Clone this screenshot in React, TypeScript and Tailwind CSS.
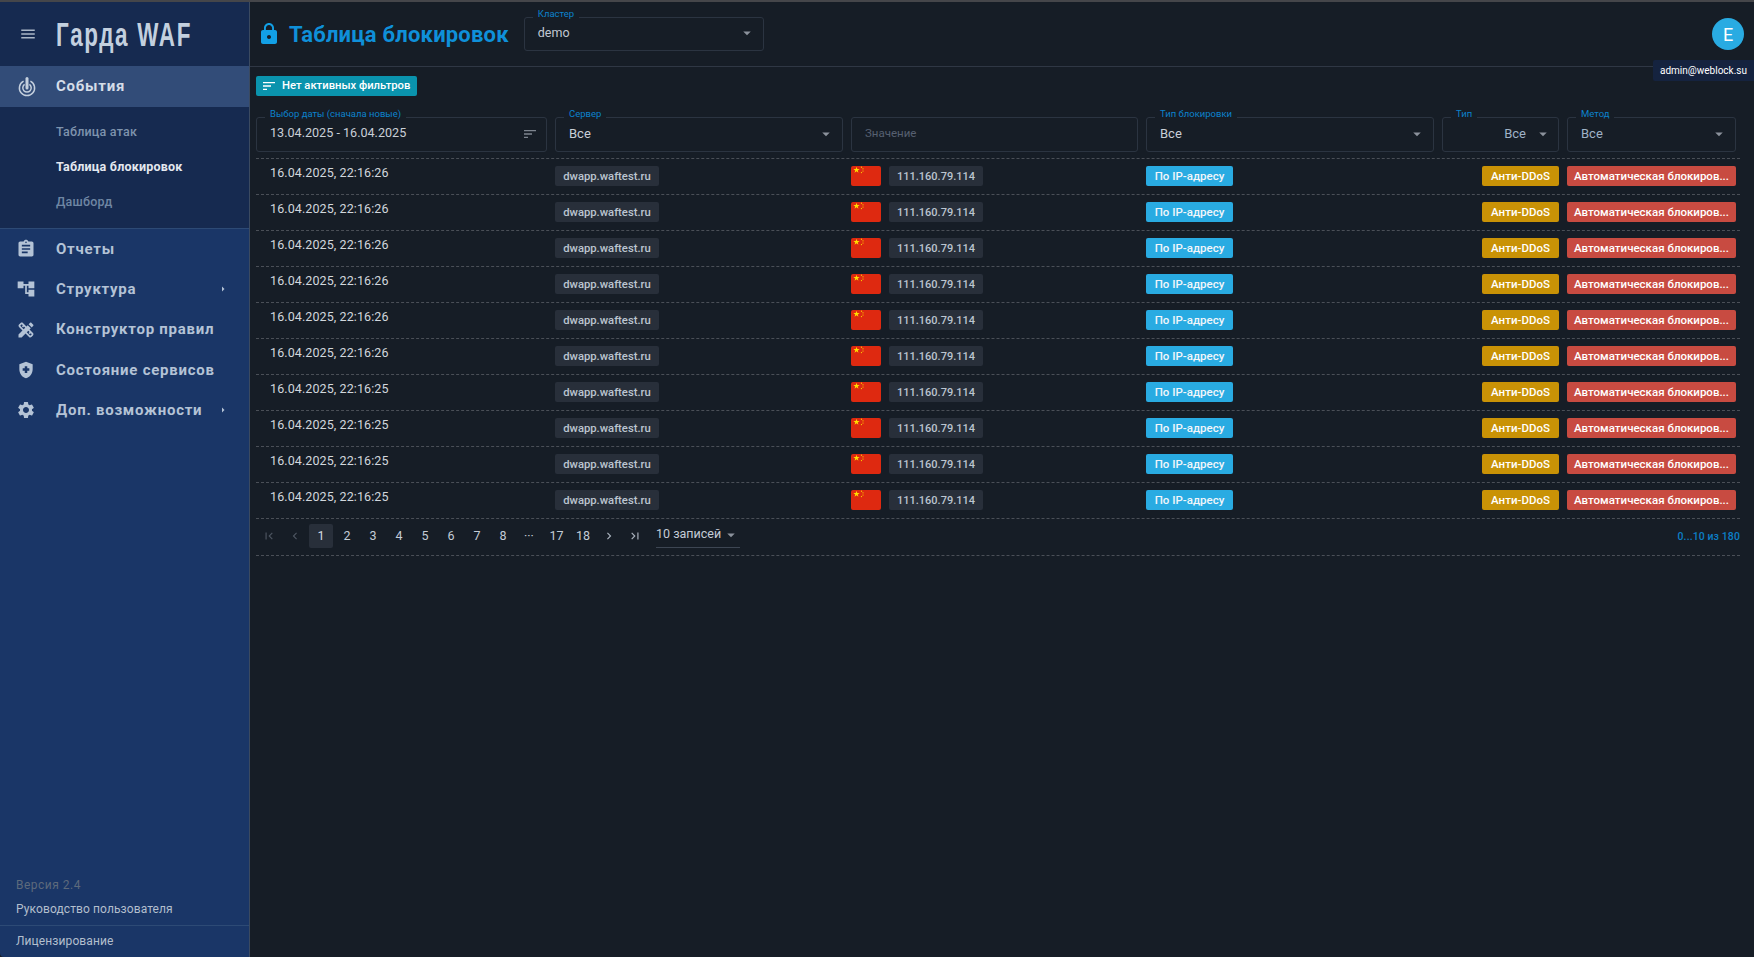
import React from "react";
import {
  MdMenu, MdAssignment, MdAccountTree, MdDesignServices, MdHealthAndSafety, MdSettings,
  MdLock, MdSort, MdArrowDropDown, MdArrowRight, MdFirstPage, MdLastPage, MdChevronLeft, MdChevronRight,
} from "react-icons/md";

const GRID = "grid grid-cols-[291px_288px_287px_288px_117px_169px] gap-x-2";

function EventsIcon() {
  return (
    <svg viewBox="0 0 20 20" className="w-[20px] h-[20px] text-[#c5d0de]" fill="none" stroke="currentColor">
      <path d="M6.6 4.2a7.6 7.6 0 1 0 6.8 0" strokeWidth="1.5" />
      <path d="M7.6 7.4a4.2 4.2 0 1 0 4.8 0" strokeWidth="1.5" />
      <path d="M10 1.5v9.5" strokeWidth="3" strokeLinecap="round" />
    </svg>
  );
}

function Flag() {
  return (
    <svg viewBox="0 0 30 20" className="w-[30px] h-[20px] rounded-[2px] shrink-0">
      <rect width="30" height="20" fill="#de2910" />
      <polygon fill="#ffde00" points="5.5,0.7 6.27,2.94 8.64,2.98 6.75,4.41 7.44,6.67 5.5,5.3 3.56,6.67 4.25,4.41 2.36,2.98 4.73,2.94" />
      <circle cx="10.5" cy="1.2" r="0.6" fill="#ffde00" />
      <circle cx="12" cy="2.8" r="0.6" fill="#ffde00" />
      <circle cx="12" cy="5" r="0.6" fill="#ffde00" />
      <circle cx="10.5" cy="6.6" r="0.6" fill="#ffde00" />
    </svg>
  );
}

function Field({ label, className = "", children }: { label?: string; className?: string; children: React.ReactNode }) {
  return (
    <div className={`relative flex items-center border border-[#2b3441] rounded-[3px] pb-[2px] ${className}`}>
      {label && (
        <span className="absolute left-[8px] -top-[9px] h-[13px] px-[5px] bg-[#161d26] text-[9.5px] leading-[9px] text-[#0c82cc] whitespace-nowrap">
          {label}
        </span>
      )}
      {children}
    </div>
  );
}

function Caret() {
  return <MdArrowDropDown className="w-[18px] h-[18px] text-[#8b929c] shrink-0" />;
}

function Chip({ className, children }: { className: string; children: React.ReactNode }) {
  return (
    <span className={`inline-flex items-center justify-center h-[20px] rounded-[2px] font-medium whitespace-nowrap ${className}`}>
      {children}
    </span>
  );
}

const times = ["26", "26", "26", "26", "26", "26", "25", "25", "25", "25"];

function Row({ s }: { s: string }) {
  return (
    <div className={`${GRID} h-[36px] pt-[7px] border-b border-dashed border-[#4a4f57] w-[1484px]`}>
      <div className="pl-[14px] text-[12.5px] leading-[13px] text-[#d2d7dd] tracking-[0.1px]">16.04.2025, 22:16:{s}</div>
      <div className="flex items-start">
        <Chip className="w-[104px] pt-[2px] bg-[#282f3a] text-[#bcc5d0] text-[11.25px]">dwapp.waftest.ru</Chip>
      </div>
      <div className="flex items-start gap-2">
        <Flag />
        <Chip className="w-[94px] pt-[2px] bg-[#282f3a] text-[#bcc5d0] text-[11px]">111.160.79.114</Chip>
      </div>
      <div className="flex items-start">
        <Chip className="w-[87px] pt-[1px] bg-[#29abe2] text-[#f2f6fa] text-[11.5px]">По IP-адресу</Chip>
      </div>
      <div className="flex justify-end items-start">
        <Chip className="w-[77px] pt-[1px] bg-[#c99206] text-white text-[11.5px]">Анти-DDoS</Chip>
      </div>
      <div className="flex items-start">
        <Chip className="w-[169px] pt-[1px] bg-[#c84b41] text-white text-[11.5px]">Автоматическая блокиров...</Chip>
      </div>
    </div>
  );
}

function NavItem({ icon, label, arrow }: { icon: React.ReactNode; label: string; arrow?: boolean }) {
  return (
    <div className="flex items-center h-[40.25px] pl-[16px] pr-[20px]">
      <span className="w-[40px] shrink-0 flex items-center">{icon}</span>
      <span className="flex-1 text-[15px] font-bold tracking-[0.75px] text-[#b4c3d6] whitespace-nowrap">{label}</span>
      {arrow && <MdArrowRight className="w-[12px] h-[12px] text-[#b4c3d6]" />}
    </div>
  );
}

const navIcon = "w-[20px] h-[20px] text-[#b4c3d6]";

function Sidebar() {
  return (
    <aside className="w-[250px] shrink-0 flex flex-col bg-[#1a3667] border-r border-[#3b4a60] rounded-bl-[4px]">
      <div className="h-[64px] bg-[#162a50] flex items-center shrink-0 overflow-hidden">
        <MdMenu className="w-[18px] h-[18px] ml-[19px] text-[#aab6c6] shrink-0" />
        <span className="ml-[19px] shrink-0 text-[33px] leading-none font-bold tracking-[2.5px] text-[#c3d0df] [font-family:'Liberation_Sans',sans-serif] [transform:scaleX(0.68)] origin-left whitespace-nowrap">
          Гарда WAF
        </span>
      </div>
      <div className="h-[41px] bg-[#324c78] flex items-center pl-[17px] shrink-0">
        <span className="w-[39px] flex"><EventsIcon /></span>
        <span className="text-[15px] font-bold tracking-[0.75px] text-[#d5dde8]">События</span>
      </div>
      <div className="h-[122px] bg-[#162a50] border-b border-[#2d4a75] pt-[8px] pl-[56px] text-[12.5px] font-medium tracking-[0.2px] shrink-0">
        <div className="h-[35px] flex items-center text-[#7e93ad]">Таблица атак</div>
        <div className="h-[35px] flex items-center text-[#e3e8ef] font-bold">Таблица блокировок</div>
        <div className="h-[35px] flex items-center text-[#6f86a3]">Дашборд</div>
      </div>
      <nav className="flex flex-col">
        <NavItem icon={<MdAssignment className={navIcon} />} label="Отчеты" />
        <NavItem icon={<MdAccountTree className={navIcon} />} label="Структура" arrow />
        <NavItem icon={<MdDesignServices className={navIcon} />} label="Конструктор правил" />
        <NavItem icon={<MdHealthAndSafety className={navIcon} />} label="Состояние сервисов" />
        <NavItem icon={<MdSettings className={navIcon} />} label="Доп. возможности" arrow />
      </nav>
      <div className="mt-auto text-[12px] tracking-[0.1px]">
        <div className="pl-[16px] h-[24px] flex items-center text-[#5d6a7c] tracking-[0.5px]">Версия 2.4</div>
        <div className="pl-[16px] h-[24px] flex items-center text-[#b3bfcd]">Руководство пользователя</div>
        <div className="h-[4px]" />
        <div className="pl-[16px] h-[32px] pb-[2px] flex items-center border-t border-[#2d4a75] text-[#b3bfcd]">Лицензирование</div>
      </div>
    </aside>
  );
}

function Pagination() {
  const pages = ["1", "2", "3", "4", "5", "6", "7", "8", "···"];
  return (
    <div className="flex items-center h-[37px] pb-[2px] w-[1484px] border-b border-dashed border-[#4a4f57]">
      <span className="w-[26px] flex justify-center"><MdFirstPage className="w-[14px] h-[14px] text-[#4d5560]" /></span>
      <span className="w-[26px] flex justify-center"><MdChevronLeft className="w-[14px] h-[14px] text-[#4d5560]" /></span>
      {pages.map((p, i) => (
        <span key={p} className="w-[26px] flex justify-center">
          <span className={`w-[24px] h-[24px] flex items-center justify-center rounded-[2px] text-[12.5px] ${i === 0 ? "bg-[#282f3a] text-[#d5dbe2]" : "text-[#c4ccd6]"}`}>{p}</span>
        </span>
      ))}
      <span className="ml-[1px] w-[27px] flex justify-center text-[12.5px] text-[#c4ccd6]">17</span>
      <span className="w-[26px] flex justify-center text-[12.5px] text-[#c4ccd6]">18</span>
      <span className="w-[26px] flex justify-center"><MdChevronRight className="w-[14px] h-[14px] text-[#aab2bd]" /></span>
      <span className="w-[26px] flex justify-center"><MdLastPage className="w-[14px] h-[14px] text-[#aab2bd]" /></span>
      <div className="ml-[8px] w-[84px] h-[24px] flex items-center justify-between border-b border-[#3d4653] text-[12.5px] text-[#c4ccd6] whitespace-nowrap pb-[2px]">
        <span>10 записей</span>
        <Caret />
      </div>
      <span className="ml-auto text-[10.5px] font-medium text-[#0c7fc6] tracking-[0.1px] pt-[2px]">0...10 из 180</span>
    </div>
  );
}

export default function App() {
  return (
    <div className="h-screen w-full flex flex-col overflow-hidden bg-[#161d26] [font-family:Roboto,'Liberation_Sans',sans-serif]">
      <div className="h-[2px] bg-[#45464a] shrink-0" />
      <div className="flex-1 flex min-h-0">
        <Sidebar />
        <main className="relative flex-1 min-w-0 flex flex-col">
          <header className="h-[65px] shrink-0 border-b border-[#2f3744] flex items-center pl-[7px] pr-[10px]">
            <MdLock className="w-[24px] h-[24px] text-[#12a0e6] shrink-0" />
            <h1 className="ml-[8px] text-[22px] font-bold text-[#0f90d9] tracking-[0.2px] whitespace-nowrap">Таблица блокировок</h1>
            <Field label="Кластер" className="ml-[15px] w-[240px] h-[34px] pl-[13px] pr-[7px] justify-between">
              <span className="text-[12.5px] text-[#c2c9d2]">demo</span>
              <Caret />
            </Field>
            <span className="ml-auto w-[32px] h-[32px] rounded-full bg-[#29abe2] text-white text-[18px] flex items-center justify-center">E</span>
          </header>
          <span className="absolute top-[58px] right-0 w-[101px] h-[21px] bg-[#15233f] text-white text-[10px] flex items-center justify-center rounded-l-[2px]">admin@weblock.su</span>

          <div className="pl-[6px] pt-[9px] flex flex-col">
            <div className="w-[161px] h-[20px] rounded-[2px] bg-[#0a93ad] flex items-center pl-[5px] gap-[5px] text-white text-[11.25px] font-medium whitespace-nowrap">
              <MdSort className="w-[16px] h-[16px] shrink-0" /> Нет активных фильтров
            </div>
            <div className={`${GRID} mt-[21px] h-[35px]`}>
              <Field label="Выбор даты (сначала новые)" className="pl-[13px] pr-[8px] justify-between">
                <span className="text-[12.6px] text-[#c9cfd7]">13.04.2025 - 16.04.2025</span>
                <MdSort className="w-[16px] h-[16px] text-[#7d848e]" />
              </Field>
              <Field label="Сервер" className="pl-[13px] pr-[7px] justify-between">
                <span className="text-[13px] text-[#c9cfd7]">Все</span>
                <Caret />
              </Field>
              <Field className="pl-[13px]">
                <span className="text-[11.5px] text-[#566071]">Значение</span>
              </Field>
              <Field label="Тип блокировки" className="pl-[13px] pr-[7px] justify-between">
                <span className="text-[13px] text-[#c9cfd7]">Все</span>
                <Caret />
              </Field>
              <Field label="Тип" className="justify-end pr-[6px] gap-[8px]">
                <span className="text-[13px] text-[#9fb2c6]">Все</span>
                <Caret />
              </Field>
              <Field label="Метод" className="pl-[13px] pr-[7px] justify-between">
                <span className="text-[13px] text-[#9fb2c6]">Все</span>
                <Caret />
              </Field>
            </div>
            <div className="mt-[6px] w-[1484px] border-b border-dashed border-[#4a4f57]" />
            {times.map((s, i) => <Row key={i} s={s} />)}
            <Pagination />
          </div>
        </main>
      </div>
    </div>
  );
}
